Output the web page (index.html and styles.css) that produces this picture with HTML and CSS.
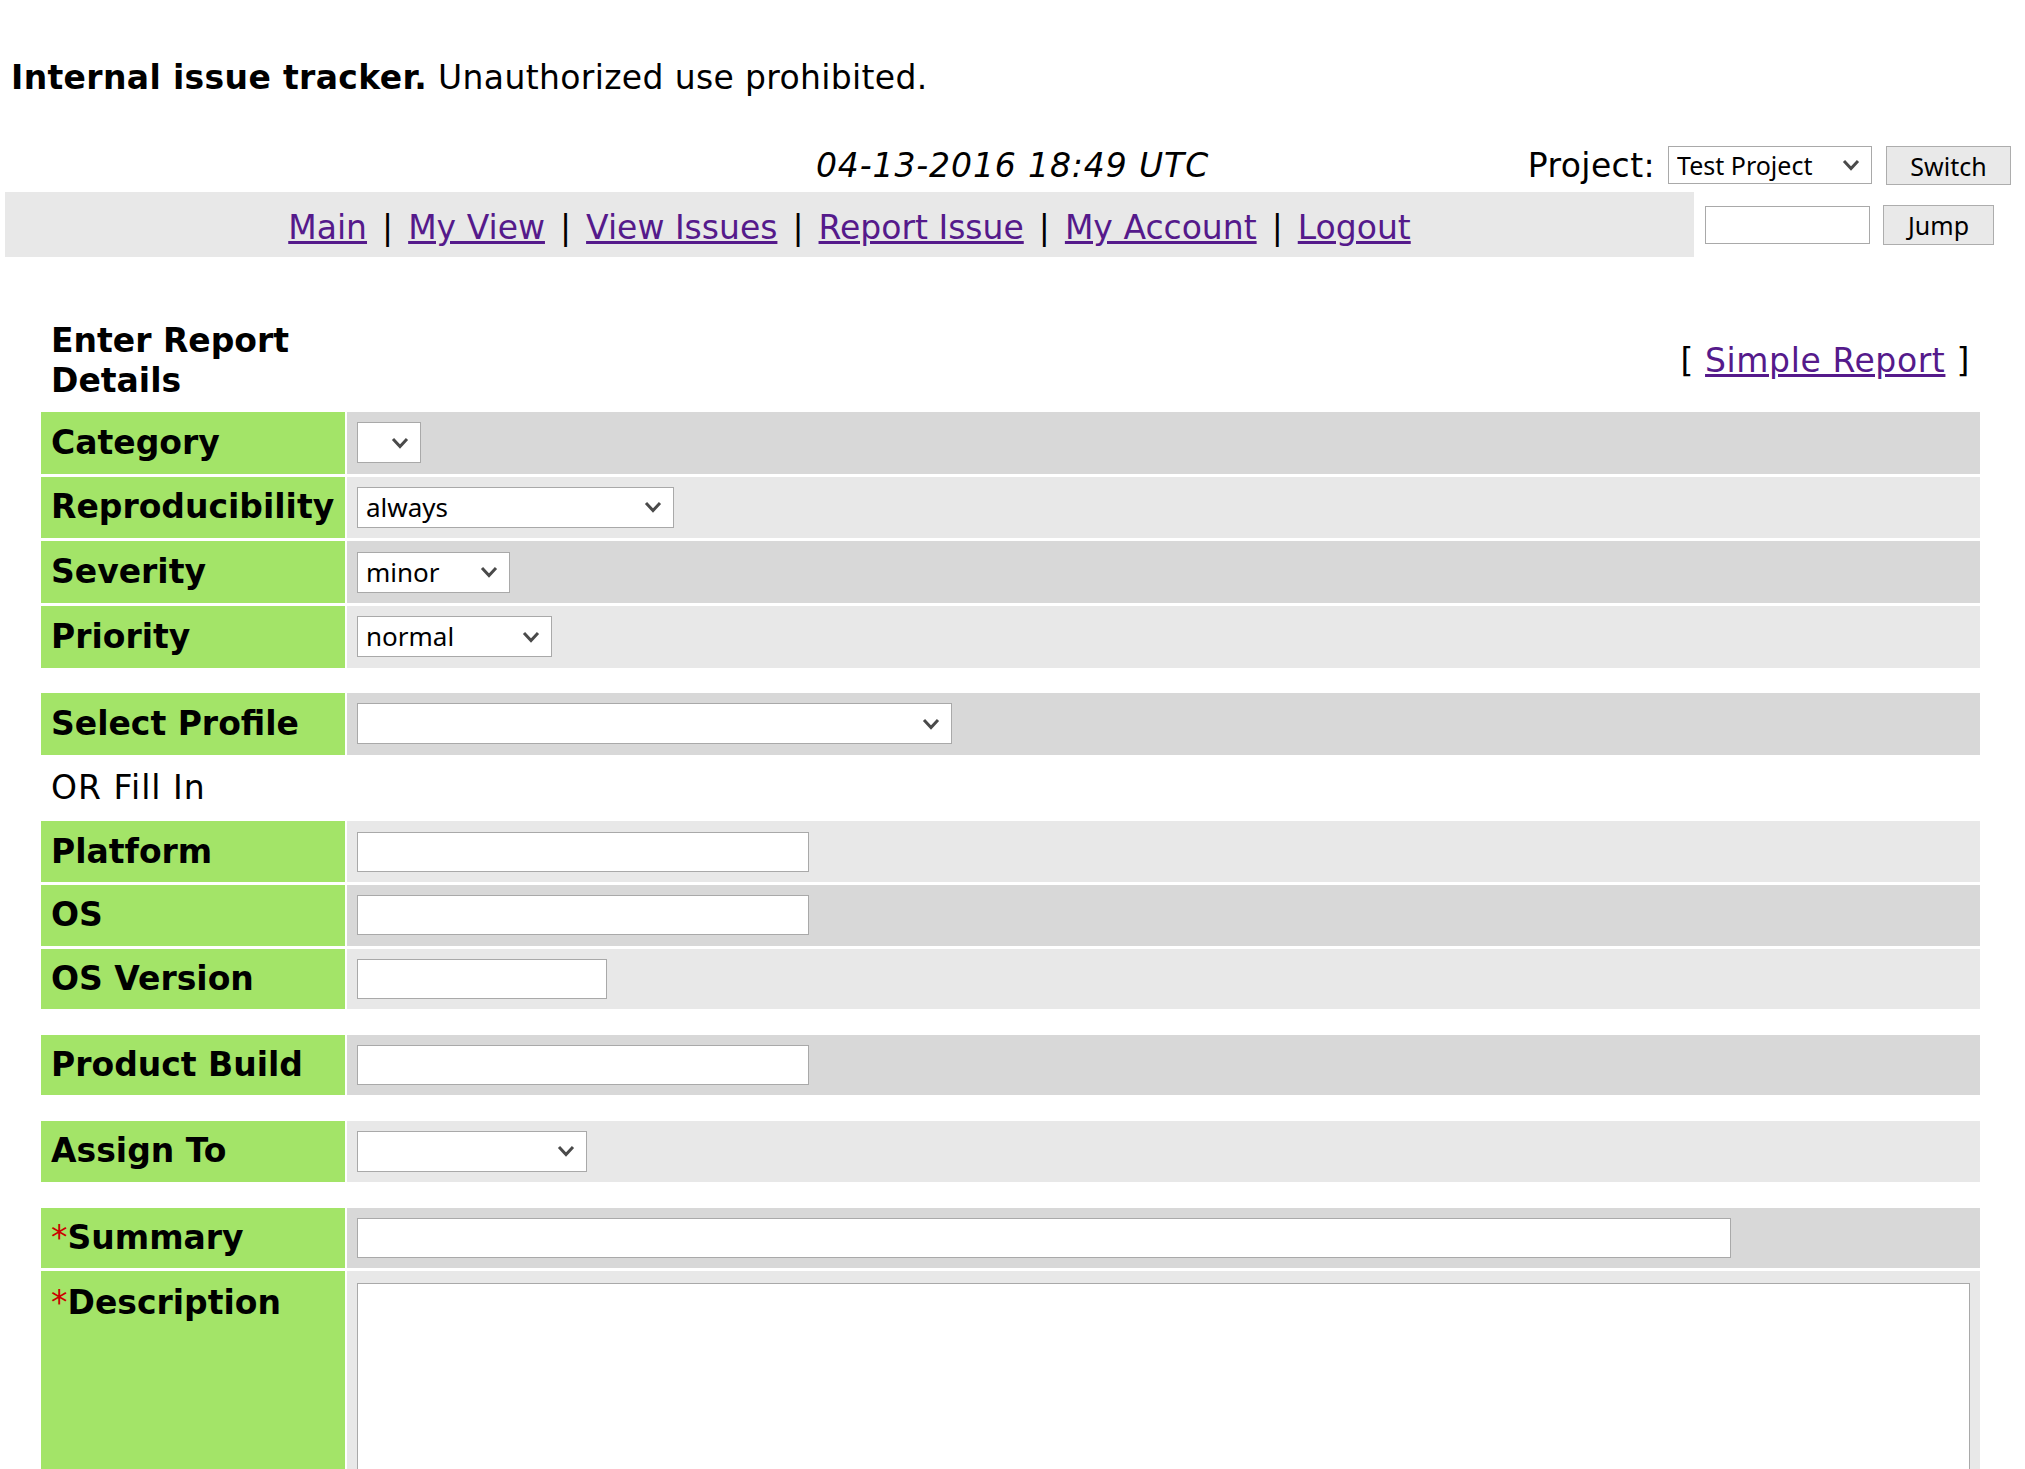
FILE: index.html
```html
<!DOCTYPE html>
<html lang="en">
<head>
<meta charset="utf-8">
<title>Report Issue - Internal issue tracker</title>
<link rel="stylesheet" href="styles.css">
</head>
<body>
<div class="banner"><b>Internal issue tracker.</b> Unauthorized use prohibited.</div>

<div class="login-bar">
  <div class="login-date">04-13-2016 18:49 UTC</div>
  <form class="project-form">
    <span class="project-label">Project:</span>
    <div class="pick">
      <select class="ctl sel-project"><option>Test Project</option></select>
      <svg class="chev" width="18" height="12" viewBox="0 0 18 12"><path d="M2 2 L9 9.5 L16 2" fill="none" stroke="#4a4a4a" stroke-width="3"/></svg>
    </div>
    <button type="button" class="ctl btn btn-switch">Switch</button>
  </form>
</div>

<div class="menu-row">
  <div class="menu">
    <a href="#">Main</a><span class="sep">|</span><a href="#">My View</a><span class="sep">|</span><a href="#">View Issues</a><span class="sep">|</span><a href="#">Report Issue</a><span class="sep">|</span><a href="#">My Account</a><span class="sep">|</span><a href="#">Logout</a>
  </div>
  <form class="jump">
    <input type="text" class="ctl text in-jump">
    <button type="button" class="ctl btn btn-jump">Jump</button>
  </form>
</div>

<table class="report">
  <tr class="title-row">
    <td class="form-title">Enter Report Details</td>
    <td class="simple">[ <a href="#">Simple Report</a> ]</td>
  </tr>
  <tr class="row-1">
    <td class="label">Category</td>
    <td class="value"><div class="pick"><select class="ctl sel-cat"><option></option></select><svg class="chev" width="18" height="12" viewBox="0 0 18 12"><path d="M2 2 L9 9.5 L16 2" fill="none" stroke="#4a4a4a" stroke-width="3"/></svg></div></td>
  </tr>
  <tr class="row-2">
    <td class="label">Reproducibility</td>
    <td class="value"><div class="pick"><select class="ctl sel-repro"><option>always</option></select><svg class="chev" width="18" height="12" viewBox="0 0 18 12"><path d="M2 2 L9 9.5 L16 2" fill="none" stroke="#4a4a4a" stroke-width="3"/></svg></div></td>
  </tr>
  <tr class="row-1">
    <td class="label">Severity</td>
    <td class="value"><div class="pick"><select class="ctl sel-sev"><option>minor</option></select><svg class="chev" width="18" height="12" viewBox="0 0 18 12"><path d="M2 2 L9 9.5 L16 2" fill="none" stroke="#4a4a4a" stroke-width="3"/></svg></div></td>
  </tr>
  <tr class="row-2">
    <td class="label">Priority</td>
    <td class="value"><div class="pick"><select class="ctl sel-prio"><option>normal</option></select><svg class="chev" width="18" height="12" viewBox="0 0 18 12"><path d="M2 2 L9 9.5 L16 2" fill="none" stroke="#4a4a4a" stroke-width="3"/></svg></div></td>
  </tr>
  <tr class="spacer"><td colspan="2"></td></tr>
  <tr class="row-1">
    <td class="label">Select Profile</td>
    <td class="value"><div class="pick"><select class="ctl sel-profile"><option></option></select><svg class="chev" width="18" height="12" viewBox="0 0 18 12"><path d="M2 2 L9 9.5 L16 2" fill="none" stroke="#4a4a4a" stroke-width="3"/></svg></div></td>
  </tr>
  <tr class="plain">
    <td colspan="2" class="or-fill">OR Fill In</td>
  </tr>
  <tr class="row-2">
    <td class="label">Platform</td>
    <td class="value"><input type="text" class="ctl text in-wide"></td>
  </tr>
  <tr class="row-1">
    <td class="label">OS</td>
    <td class="value"><input type="text" class="ctl text in-wide"></td>
  </tr>
  <tr class="row-2">
    <td class="label">OS Version</td>
    <td class="value"><input type="text" class="ctl text in-short"></td>
  </tr>
  <tr class="spacer"><td colspan="2"></td></tr>
  <tr class="row-1">
    <td class="label">Product Build</td>
    <td class="value"><input type="text" class="ctl text in-wide"></td>
  </tr>
  <tr class="spacer"><td colspan="2"></td></tr>
  <tr class="row-2">
    <td class="label">Assign To</td>
    <td class="value"><div class="pick"><select class="ctl sel-assign"><option></option></select><svg class="chev" width="18" height="12" viewBox="0 0 18 12"><path d="M2 2 L9 9.5 L16 2" fill="none" stroke="#4a4a4a" stroke-width="3"/></svg></div></td>
  </tr>
  <tr class="spacer"><td colspan="2"></td></tr>
  <tr class="row-1">
    <td class="label"><span class="required">*</span>Summary</td>
    <td class="value"><input type="text" class="ctl text in-summary"></td>
  </tr>
  <tr class="row-2 top">
    <td class="label"><span class="required">*</span>Description</td>
    <td class="value"><textarea class="ctl area"></textarea></td>
  </tr>
</table>
</body>
</html>
```

FILE: styles.css
```css
html, body {
  margin: 0;
  padding: 0;
  background: #fff;
}

body {
  font-family: "DejaVu Sans", Verdana, sans-serif;
  font-size: 33px;
  line-height: 40px;
  color: #000;
  padding: 0 5px;
}

a {
  color: #551a8b;
}

.banner {
  margin-top: 58px;
  padding-left: 6px;
  letter-spacing: 0.35px;
}

.login-bar {
  display: grid;
  grid-template-columns: 1fr auto 1fr;
  margin-top: 48px;
  height: 40px;
}

.login-date {
  grid-column: 2;
  font-style: italic;
  letter-spacing: 0.9px;
}

.project-form {
  grid-column: 3;
  justify-self: end;
  display: flex;
  align-items: flex-start;
  margin: 0 9px 0 0;
}

.project-label {
  margin-right: 13px;
  letter-spacing: 0.4px;
}

.menu-row {
  display: flex;
  margin-top: 6px;
  height: 65px;
}

.menu {
  flex: 1;
  background: #e8e8e8;
  text-align: center;
  padding-top: 16px;
  box-sizing: border-box;
}

.sep {
  margin: 0 15px;
}

.jump {
  display: flex;
  align-items: center;
  gap: 13px;
  padding: 0 26px 0 11px;
  margin: 0;
}

/* form controls */
.ctl {
  font-family: "Noto Sans", "DejaVu Sans", sans-serif;
  font-size: 26px;
  color: #000;
  box-sizing: border-box;
  margin: 0;
}

.pick {
  position: relative;
  width: fit-content;
}

.pick select {
  -webkit-appearance: none;
  appearance: none;
  display: block;
  height: 41px;
  border: 1px solid #a9a9a9;
  border-radius: 0;
  background: #fff;
  padding: 0 40px 0 8px;
  line-height: 39px;
}

.pick .chev {
  position: absolute;
  right: 12px;
  top: 50%;
  margin-top: -6px;
  pointer-events: none;
}

.sel-project { width: 204px; height: 38px !important; line-height: 36px !important; font-size: 25px; }
.sel-cat { width: 64px; }
.sel-repro { width: 317px; }
.sel-sev { width: 153px; }
.sel-prio { width: 195px; }
.sel-profile { width: 595px; }
.sel-assign { width: 230px; }

.text {
  display: block;
  height: 40px;
  border: 1px solid #a9a9a9;
  border-radius: 0;
  background: #fff;
  padding: 0 6px;
}

.in-jump { width: 165px; height: 38px; }
.in-wide { width: 452px; }
.in-short { width: 250px; }
.in-summary { width: 1374px; }

.area {
  display: block;
  width: 1613px;
  height: 380px;
  border: 1px solid #a9a9a9;
  border-radius: 0;
  background: #fff;
  resize: none;
}

.btn {
  border: 1px solid #adadad;
  border-radius: 0;
  background: #e9e9e9;
  padding: 0;
  font-size: 25px;
}

.btn-switch { width: 125px; height: 39px; margin-left: 14px; }
.btn-jump { width: 111px; height: 40px; }

/* report table */
.report {
  width: 1943px;
  margin: 53px 0 0 34px;
  border-spacing: 2px 3px;
}

.report td {
  padding: 10.33px 10px;
  line-height: 40px;
  vertical-align: middle;
}

.report .title-row td {
  padding: 8px 10px 8px;
}

.report td.form-title {
  width: 304px;
  box-sizing: border-box;
  font-weight: bold;
}

.report td.simple {
  text-align: right;
  letter-spacing: 0.6px;
}

.report td.label {
  width: 304px;
  box-sizing: border-box;
  background: #a3e468;
  font-weight: bold;
  white-space: nowrap;
}

.report td.or-fill {
  letter-spacing: 1px;
}

.row-1 td.value { background: #d8d8d8; }
.row-2 td.value { background: #e8e8e8; }

.report .spacer td {
  height: 19.33px;
  padding: 0;
}

.report .top td {
  vertical-align: top;
  padding-top: 12px;
}

.required {
  color: #cc0000;
  font-weight: normal;
  letter-spacing: 0;
}
```
